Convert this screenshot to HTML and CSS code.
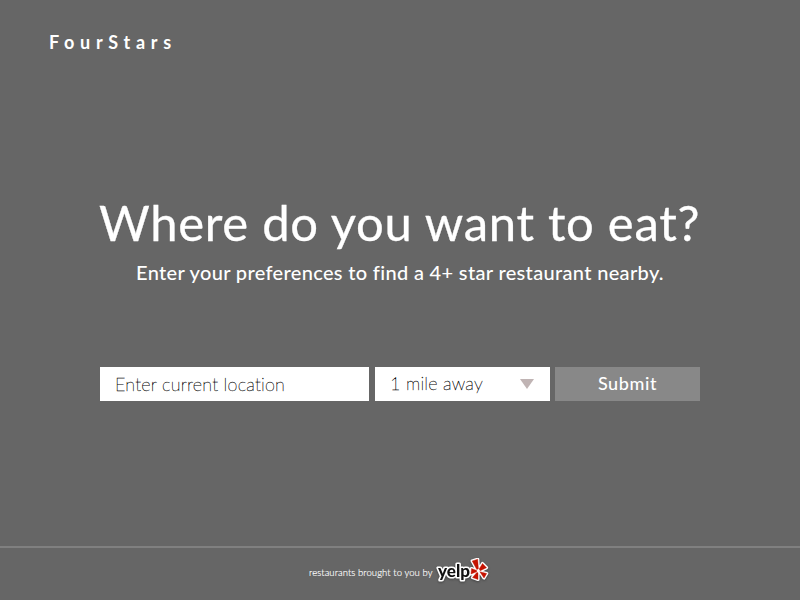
FILE: index.html
```html
<!DOCTYPE html>
<html lang="en">
<head>
<meta charset="utf-8">
<title>FourStars</title>
<link rel="stylesheet" href="styles.css">
</head>
<body>
<header class="brand"><span>FourStars</span></header>
<main class="hero">
  <h1 class="title"><span>Where do you want to eat?</span></h1>
  <p class="subtitle"><span>Enter your preferences to find a 4+ star restaurant nearby.</span></p>
  <form class="search">
    <div class="field location"><span>Enter current location</span></div>
    <div class="field distance"><span>1 mile away</span>
      <svg class="arrow" width="14" height="10" viewBox="0 0 14 10"><path d="M0 0H14L7 10Z" fill="#c0b4b4"/></svg>
    </div>
    <button class="submit" type="button"><span>Submit</span></button>
  </form>
</main>
<footer class="footer">
  <span class="credit">restaurants brought to you by</span>
  <svg class="yelp" width="54" height="28" viewBox="0 0 54 28">
    <g class="halo">
      <text x="3" y="19" textLength="32" lengthAdjust="spacingAndGlyphs">yelp</text>
      <path d="M37.200 3L42.700 1.200L43.400 10.800L41.800 11.500ZM44.200 11L47.500 5.500L51.500 9.700L45.200 12.700ZM44.800 13.700L51.700 15.500L49 20ZM43 14.800V21.500L37.500 19.500L41.800 14.500ZM36.500 10.500L41.700 12.500V13.700L36 16Z"/>
    </g>
    <text class="word" x="3" y="19" textLength="32" lengthAdjust="spacingAndGlyphs">yelp</text>
    <path class="red" d="M37.200 3L42.700 1.200L43.400 10.800L41.800 11.500ZM44.200 11L47.500 5.500L51.500 9.700L45.200 12.700ZM44.800 13.700L51.700 15.500L49 20ZM43 14.800V21.500L37.500 19.500L41.800 14.500ZM36.500 10.500L41.700 12.500V13.700L36 16Z"/>
  </svg>
</footer>
</body>
</html>
```
FILE: styles.css
```css
* { box-sizing: border-box; }
body {
  margin: 0;
  width: 800px;
  height: 600px;
  overflow: hidden;
  display: flex;
  flex-direction: column;
  background: #666;
  color: #fff;
  font-family: Lato, "Liberation Sans", sans-serif;
}
.brand {
  height: 194px;
  padding: 30px 49px 0;
  font-size: 18px;
  font-weight: 700;
  line-height: 24px;
  letter-spacing: 5.7px;
}
.hero { width: 600px; margin: 0 auto; flex: 1; }
.title {
  margin: 0 0 0 -1px;
  font-size: 49px;
  font-weight: 400;
  line-height: 56px;
  white-space: nowrap;
  letter-spacing: 0.7px;
  -webkit-text-stroke: 0.3px #fff;
}
.subtitle {
  margin: 10px 0 0;
  font-size: 20px;
  font-weight: 500;
  line-height: 24px;
  text-align: center;
  white-space: nowrap;
  letter-spacing: 0.33px;
}
.search { display: flex; margin: 83px 0 0; height: 34px; }
.field {
  display: flex;
  align-items: center;
  background: #fff;
  color: #000;
  padding: 0 15px;
  font-size: 18px;
  font-weight: 200;
  white-space: nowrap;
  letter-spacing: 0.2px;
  -webkit-text-stroke: 0.3px #000;
}
.location { width: 269px; margin-right: 6px; }
.distance { width: 175px; margin-right: 5px; padding: 0 16px 2px 15px; justify-content: space-between; }
.arrow { margin-top: 2px; }
.submit {
  width: 145px;
  border: 0;
  padding: 0 0 2px;
  background: #888;
  color: #fff;
  font: 500 18px Lato, "Liberation Sans", sans-serif;
  letter-spacing: 0.6px;
}
.footer {
  height: 54px;
  border-top: 2px solid #808080;
  display: flex;
  padding-left: 309px;
}
.credit {
  width: 126px;
  font-size: 9.5px;
  font-weight: 300;
  line-height: 50px;
  white-space: nowrap;
  letter-spacing: 0.08px;
  -webkit-text-stroke: 0.15px #fff;
}
.yelp {
  margin-top: 10px;
  font: 900 17px Lato, sans-serif;
  filter: drop-shadow(0 1px 1px #444);
}
.halo { fill: #fff; stroke: #fff; stroke-width: 3.2px; stroke-linejoin: round; }
.word { fill: #111; }
.red { fill: #c41200; stroke: #c41200; stroke-width: 0.4px; }
```
